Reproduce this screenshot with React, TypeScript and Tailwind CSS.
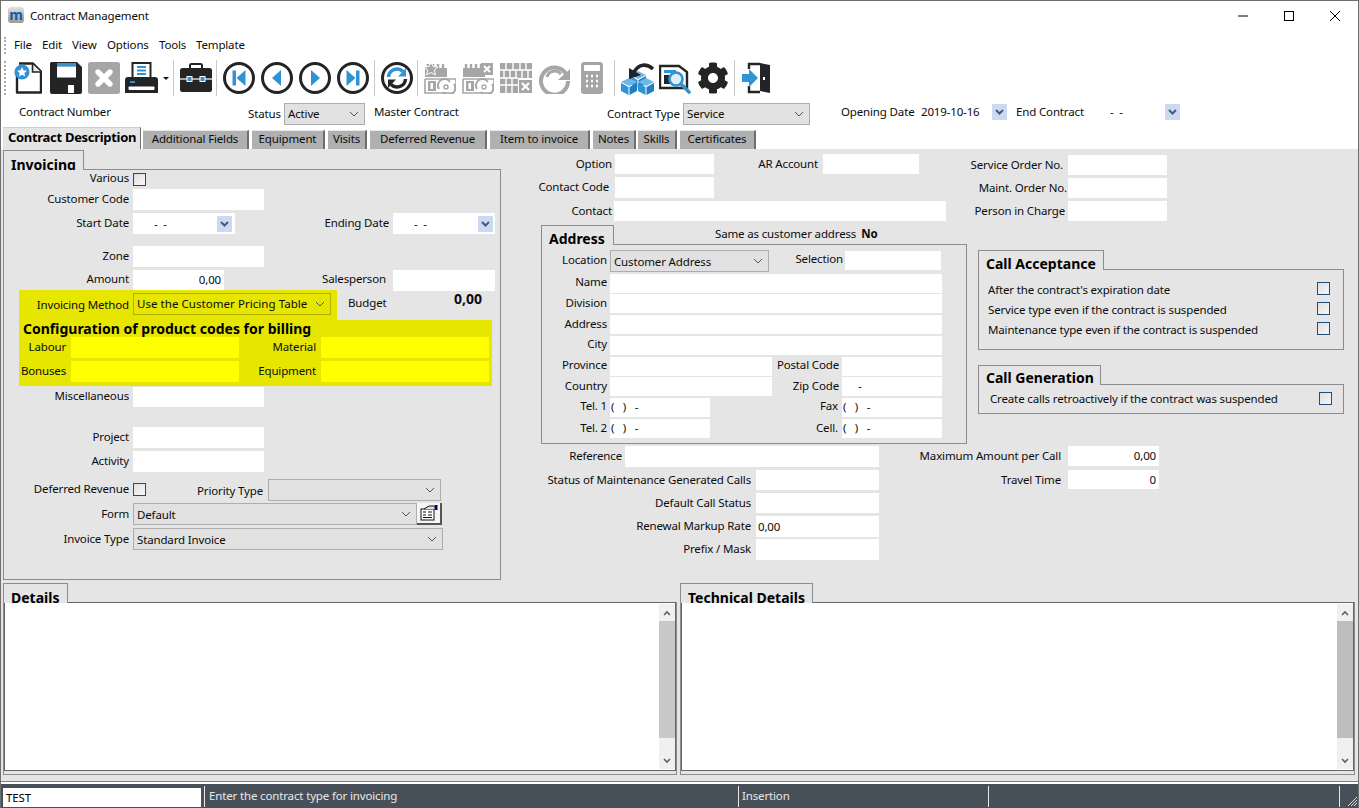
import React from "react";
import { FaCog } from "react-icons/fa";

type P = { c?: string; children?: React.ReactNode };

const L = ({ c = "", children }: P) => (
  <span className={`shrink-0 text-right whitespace-nowrap mt-[-2px] ${c}`}>{children}</span>
);
const I = ({ c = "", children }: P) => (
  <div className={`shrink-0 bg-white flex items-center whitespace-pre ${c}`}>{children}</div>
);
const Chevron = ({ c = "" }: P) => (
  <svg width="10" height="6" viewBox="0 0 10 6" className={`shrink-0 ${c}`}>
    <path d="M1 1 L5 5 L9 1" fill="none" stroke="#555" strokeWidth="1" />
  </svg>
);
const Sel = ({ c = "", t = "", children }: P & { t?: string }) => (
  <div className={`shrink-0 flex items-center justify-between border border-[#adadad] bg-[#e1e1e1] pl-[3px] pr-[5px] whitespace-pre ${c}`}>
    <span className={t}>{children}</span>
    <Chevron />
  </div>
);
const DropBtn = ({ c = "" }: P) => (
  <div className={`shrink-0 w-[15px] h-[16px] bg-[#cbdaf3] flex items-center justify-center ${c}`}>
    <svg width="9" height="6" viewBox="0 0 9 6">
      <path d="M1 1 L4.5 4.5 L8 1" fill="none" stroke="#47597a" strokeWidth="2" />
    </svg>
  </div>
);
const Check = ({ c = "" }: P) => (
  <div className={`shrink-0 w-[13px] h-[13px] border border-[#1f4e79] bg-gradient-to-br from-[#dedede] to-[#f8f8f8] ${c}`} />
);
const Legend = ({ c = "", children }: P) => (
  <div className={`relative z-10 shrink-0 -mb-px h-[20px] border border-b-0 border-[#8c8c8c] bg-[#e5e5e5] overflow-hidden pl-[7px] font-bold text-[14px] leading-[25px] text-black tracking-normal whitespace-nowrap ${c}`}>
    {children}
  </div>
);
const Scrollbar = ({ thumb }: { thumb: string }) => (
  <div className="shrink-0 w-[16px] mt-px mb-px bg-[#f0f0f0] flex flex-col items-center">
    <div className="h-[17px] flex items-center justify-center">
      <svg width="8" height="6" viewBox="0 0 8 6"><path d="M1 5 L4 2 L7 5" fill="none" stroke="#606060" strokeWidth="1.6" /></svg>
    </div>
    <div className={`w-full h-[117px] ${thumb}`} />
    <div className="flex-1 w-full flex items-end justify-center pb-[5px]">
      <svg width="8" height="6" viewBox="0 0 8 6"><path d="M1 1 L4 4 L7 1" fill="none" stroke="#606060" strokeWidth="1.6" /></svg>
    </div>
  </div>
);
const Sep = ({ c = "" }: P) => <div className={`shrink-0 w-px h-[36px] bg-[#c9c9c9] ${c}`} />;

const DK = "#222426";
const BL = "#2f93d6";
const GR = "#a6a6a6";

const NewIcon = () => (
  <svg width="28" height="32" viewBox="0 0 28 32" className="shrink-0">
    <path d="M5 1.5 H19 L27 9.5 V30.5 H3 V10" fill="#fff" stroke={DK} strokeWidth="2.4" strokeLinejoin="round" />
    <path d="M18.5 2 V10 H27" fill="#e9e9e9" stroke={DK} strokeWidth="1.6" />
    <circle cx="8" cy="10" r="7.6" fill={BL} />
    <path d="M8 5 L9.5 8.3 L13 8.7 L10.4 11 L11.1 14.5 L8 12.7 L4.9 14.5 L5.6 11 L3 8.7 L6.5 8.3 Z" fill="#fff" />
  </svg>
);
const SaveIcon = () => (
  <svg width="32" height="32" viewBox="0 0 32 32" className="shrink-0">
    <path d="M1.5 0 H27 L32 5 V30 A2 2 0 0 1 30 32 H2 A2 2 0 0 1 0 30 V1.5 A1.5 1.5 0 0 1 1.5 0 Z" fill={DK} />
    <rect x="7" y="1" width="19" height="3.5" fill={BL} />
    <rect x="7" y="4.5" width="19" height="11" fill="#fff" />
    <rect x="18" y="23" width="6" height="8" fill="#fff" />
  </svg>
);
const CancelIcon = () => (
  <svg width="32" height="32" viewBox="0 0 32 32" className="shrink-0">
    <rect width="32" height="32" rx="2.5" fill={GR} />
    <path d="M10 10 L22 22 M22 10 L10 22" stroke="#fff" strokeWidth="5.4" strokeLinecap="round" />
  </svg>
);
const PrintIcon = () => (
  <svg width="33" height="32" viewBox="0 0 33 32" className="shrink-0">
    <rect x="7.5" y="1" width="18" height="15" fill="#fff" stroke={DK} strokeWidth="2" />
    <path d="M12 5 H21 M12 8.5 H21 M12 12 H21" stroke={BL} strokeWidth="2" />
    <path d="M3 15 H30 A3 3 0 0 1 33 18 V31 H0 V18 A3 3 0 0 1 3 15 Z" fill={DK} />
    <rect x="5" y="19" width="5" height="2" fill={BL} />
    <rect x="3.5" y="24.5" width="26" height="3.5" rx="1" fill="#fff" />
  </svg>
);
const CaseIcon = () => (
  <svg width="32" height="32" viewBox="0 0 32 32" className="shrink-0">
    <path d="M10 7 V3.5 A1.5 1.5 0 0 1 11.5 2 H20.5 A1.5 1.5 0 0 1 22 3.5 V7" fill="none" stroke={DK} strokeWidth="2" />
    <rect x="0" y="6" width="32" height="24" rx="2.5" fill={DK} />
    <path d="M0 17 H32" stroke="#fff" strokeWidth="1.2" />
    <rect x="7" y="14.5" width="5" height="5" fill={BL} stroke="#fff" strokeWidth="1" />
    <rect x="20" y="14.5" width="5" height="5" fill={BL} stroke="#fff" strokeWidth="1" />
  </svg>
);
const Nav = ({ kind }: { kind: "first" | "prev" | "next" | "last" }) => (
  <svg width="32" height="32" viewBox="0 0 32 32" className="shrink-0">
    <circle cx="16" cy="16" r="14.5" fill="#fff" stroke={DK} strokeWidth="3" />
    {kind === "first" && <path d="M9.5 8.5 H13 V23.5 H9.5 Z M22.5 8 V24 L13.5 16 Z" fill={BL} />}
    {kind === "prev" && <path d="M20 8 V24 L11 16 Z" fill={BL} />}
    {kind === "next" && <path d="M12 8 V24 L21 16 Z" fill={BL} />}
    {kind === "last" && <path d="M22.5 8.5 H19 V23.5 H22.5 Z M9.5 8 V24 L18.5 16 Z" fill={BL} />}
  </svg>
);
const RefreshIcon = () => (
  <svg width="32" height="32" viewBox="0 0 32 32" className="shrink-0">
    <circle cx="16" cy="16" r="14.5" fill="#fff" stroke={DK} strokeWidth="3" />
    <path d="M7.5 15 A8.5 8.5 0 0 1 22 9.5" fill="none" stroke={BL} strokeWidth="3.4" />
    <path d="M25 6 V14.5 H17 Z" fill={BL} />
    <path d="M24.5 17 A8.5 8.5 0 0 1 10 22.5" fill="none" stroke={DK} strokeWidth="3.4" />
    <path d="M7 26 V17.5 H15 Z" fill={DK} />
  </svg>
);
const CalIcon = ({ top }: { top: "star" | "x" }) => (
  <svg width="33" height="32" viewBox="0 0 33 32" className="shrink-0">
    <path d="M2 6 H24 V15 H2 Z" fill={GR} />
    <path d="M5 2 V6 M10 2 V6 M15 2 V6 M20 2 V6" stroke={GR} strokeWidth="2.4" />
    {top === "star" ? (
      <path d="M8 0 L10 4.5 L15 5 L11.3 8 L12.4 13 L8 10.5 L3.6 13 L4.7 8 L1 5 L6 4.5 Z" fill={GR} stroke="#fff" strokeWidth="1" />
    ) : (
      <g>
        <rect x="20" y="1" width="12" height="12" fill={GR} />
        <path d="M23 4 L29 10 M29 4 L23 10" stroke="#fff" strokeWidth="2" />
      </g>
    )}
    <path d="M2 17 H33 M2 17 V31 H31 M33 17 V25" fill="none" stroke={GR} strokeWidth="1.6" />
    <rect x="5" y="19" width="8" height="10" fill={GR} />
    <rect x="7.5" y="21" width="2.5" height="6" fill="#fff" />
    <path d="M16 27 A6 6 0 0 1 27 20 M20 30 A6 6 0 0 0 31 22" fill="none" stroke={GR} strokeWidth="2" />
    <circle cx="23" cy="25" r="2" fill="none" stroke={GR} strokeWidth="1.4" />
  </svg>
);
const GridIcon = () => (
  <svg width="32" height="32" viewBox="0 0 32 32" className="shrink-0">
    <path d="M0 1 H32 V16 H18 V31 H0 Z" fill={GR} />
    <path d="M0 8 H32 M0 16 H18 M0 23 H18 M6 1 V8 M13 1 V8 M20 1 V8 M26 1 V8 M4 8 V16 M10 8 V16 M16 8 V16 M22 8 V16 M28 8 V16 M6 16 V31 M12 16 V31" stroke="#fff" strokeWidth="1.4" />
    <rect x="19" y="18" width="13" height="13" fill={GR} />
    <path d="M22 21 L29 28 M29 21 L22 28" stroke="#fff" strokeWidth="2.2" />
  </svg>
);
const GrayRefresh = () => (
  <svg width="32" height="32" viewBox="0 0 32 32" className="shrink-0">
    <path d="M28 12 A13.5 13.5 0 1 0 30 19" fill="none" stroke={GR} strokeWidth="4" />
    <path d="M9 15 A8 8 0 0 1 23 12" fill="none" stroke={GR} strokeWidth="3" />
    <path d="M32 7 V18 H20 Z" fill={GR} />
  </svg>
);
const CalcIcon = () => (
  <svg width="22" height="32" viewBox="0 0 22 32" className="shrink-0">
    <rect width="22" height="32" rx="3" fill={GR} />
    <rect x="3" y="3" width="16" height="6" rx="1" fill="#fff" />
    <path d="M5 14 H7 M10 14 H12 M15 14 H17 M5 19 H7 M10 19 H12 M15 19 H17 M5 24 H7 M10 24 H12 M15 24 H17" stroke="#fff" strokeWidth="2.4" />
  </svg>
);
const Cube = ({ x, y }: { x: number; y: number }) => (
  <g transform={`translate(${x} ${y})`}>
    <path d="M0 4 L8 0 L16 4 L8 8 Z" fill="#6cb8e8" />
    <path d="M0 5 L7.5 9 V17 L0 13 Z" fill={BL} />
    <path d="M16 5 L8.5 9 V17 L16 13 Z" fill="#1f7fc4" />
  </g>
);
const CubesIcon = () => (
  <svg width="34" height="33" viewBox="0 0 34 33" className="shrink-0">
    <Cube x={10} y={9} />
    <Cube x={1} y={16} />
    <Cube x={18} y={16} />
    <path d="M33 7 C26 1 19 2 14 10" fill="none" stroke={DK} strokeWidth="3.6" />
    <path d="M9 17 L9 6 L21 13 Z" fill={DK} />
  </svg>
);
const ReportIcon = () => (
  <svg width="32" height="32" viewBox="0 0 32 32" className="shrink-0">
    <path d="M1 4 H20 L28 10 V26 H1 Z" fill="#fff" stroke={DK} strokeWidth="2.4" />
    <rect x="5" y="8" width="12" height="3" fill={BL} />
    <rect x="5" y="13" width="6" height="9" fill={DK} />
    <circle cx="17" cy="17" r="6.5" fill="#dbeffb" stroke={BL} strokeWidth="2.6" />
    <path d="M22 22 L30 30" stroke={BL} strokeWidth="3.6" strokeLinecap="round" />
  </svg>
);
const ExitIcon = () => (
  <svg width="28" height="32" viewBox="0 0 28 32" className="shrink-0">
    <path d="M7 7 V2 H18 M7 24 V30 H18" fill="none" stroke={DK} strokeWidth="2.4" />
    <path d="M18 1 L28 3 V31 L18 29 Z" fill={DK} />
    <rect x="21" y="15" width="2" height="3" fill="#fff" />
    <path d="M0 12 H7 V7 L16 16 L7 25 V20 H0 Z" fill={BL} />
  </svg>
);

const Tab = ({ c = "", children }: P) => (
  <div className={`shrink-0 h-[19px] mt-[3px] bg-[#b0b0b0] border-t border-t-[#e8e8e8] border-r-2 border-r-[#6e6e6e] text-center leading-[16px] whitespace-nowrap ${c}`}>
    {children}
  </div>
);

const Row = ({ c = "", children }: P) => <div className={`flex items-center ${c}`}>{children}</div>;

const InvoicingPanel = () => (
  <div className="shrink-0 w-[498px] ml-[2px] mt-px flex flex-col h-[430px]">
    <Legend c="w-[81px] !leading-[27px]">Invoicing</Legend>
    <div className="flex-1 border border-[#8c8c8c] flex flex-col pt-[2px]">
      <Row c="h-[14px]">
        <L c="w-[125px]">Various</L>
        <Check c="ml-[4px]" />
      </Row>
      <Row c="h-[21px] mt-[3px]">
        <L c="w-[125px]">Customer Code</L>
        <I c="ml-[4px] w-[131px] h-full" />
      </Row>
      <Row c="h-[21px] mt-[3px]">
        <L c="w-[125px]">Start Date</L>
        <I c="ml-[4px] w-[102px] h-full justify-between pl-[21px] pr-[3px]">
          <span>-  -</span>
          <DropBtn />
        </I>
        <L c="w-[154px]">Ending Date</L>
        <I c="ml-[4px] w-[102px] h-full justify-between pl-[21px] pr-[2px]">
          <span>-  -</span>
          <DropBtn />
        </I>
      </Row>
      <Row c="h-[21px] mt-[12px]">
        <L c="w-[125px]">Zone</L>
        <I c="ml-[4px] w-[131px] h-full" />
      </Row>
      <Row c="h-[20px] mt-[3px]">
        <L c="w-[125px]">Amount</L>
        <I c="ml-[4px] w-[91px] h-full justify-end pr-[3px]">0,00</I>
        <L c="w-[162px]">Salesperson</L>
        <I c="ml-[7px] w-[102px] h-[21px] self-start" />
      </Row>
      <div className="flex h-[30px]">
        <Row c="ml-[15px] w-[318px] bg-[#e6e600]">
          <L c="w-[110px] !mt-0">Invoicing Method</L>
          <Sel c="ml-[4px] w-[198px] h-[22px] !bg-[#e6e600] !border-[#b0b000] mt-[-2px]" t="tracking-[0.05px]">
            Use the Customer Pricing Table
          </Sel>
        </Row>
        <L c="ml-[11px] w-[40px] !text-left !mt-[5px]">Budget</L>
        <L c="ml-[52px] w-[42px] font-bold text-[14px] tracking-normal !mt-[1px]">0,00</L>
      </div>
      <div className="ml-[15px] w-[473px] h-[66px] bg-[#e6e600] flex flex-col">
        <div className="h-[17px] pl-[4px] font-bold text-[14px] leading-[18px] whitespace-nowrap tracking-normal text-black">
          Configuration of product codes for billing
        </div>
        <Row c="h-[21px]">
          <L c="w-[47px]">Labour</L>
          <I c="ml-[5px] w-[168px] h-full !bg-[#ffff00]" />
          <L c="w-[77px]">Material</L>
          <I c="ml-[5px] w-[168px] h-full !bg-[#ffff00]" />
        </Row>
        <Row c="h-[21px] mt-[3px]">
          <L c="w-[47px]">Bonuses</L>
          <I c="ml-[5px] w-[168px] h-full !bg-[#ffff00]" />
          <L c="w-[77px]">Equipment</L>
          <I c="ml-[5px] w-[168px] h-full !bg-[#ffff00]" />
        </Row>
      </div>
      <Row c="h-[20px] mt-px">
        <L c="w-[125px]">Miscellaneous</L>
        <I c="ml-[4px] w-[131px] h-full" />
      </Row>
      <Row c="h-[21px] mt-[20px]">
        <L c="w-[125px]">Project</L>
        <I c="ml-[4px] w-[131px] h-full" />
      </Row>
      <Row c="h-[21px] mt-[3px]">
        <L c="w-[125px]">Activity</L>
        <I c="ml-[4px] w-[131px] h-full" />
      </Row>
      <Row c="h-[22px] mt-[7px]">
        <L c="w-[125px] !mt-[-3px]">Deferred Revenue</L>
        <Check c="ml-[4px] mt-[-1px]" />
        <L c="w-[117px] !mt-[2px]">Priority Type</L>
        <Sel c="ml-[5px] w-[173px] h-full" />
      </Row>
      <Row c="h-[22px] mt-[2px]">
        <L c="w-[125px] !mt-0">Form</L>
        <Sel c="ml-[4px] w-[284px] h-full" t="pt-px">Default</Sel>
        <div className="shrink-0 w-[25px] h-[22px] bg-[#f5f5f5] border-r-2 border-b-2 border-[#555] flex items-center justify-center">
          <svg width="18" height="16" viewBox="0 0 18 16">
            <rect x="1" y="4" width="13" height="11" fill="#fff" stroke="#111" />
            <path d="M3 7 H6 M8 7 H12 M3 10 H6 M8 10 H12 M3 12.5 H12" stroke="#111" />
            <path d="M4 4 L9 1 H15 V4" fill="#ddd" stroke="#111" />
            <rect x="15" y="0" width="2.5" height="5" fill="#000080" />
          </svg>
        </div>
      </Row>
      <Row c="h-[22px] mt-[3px]">
        <L c="w-[125px] !mt-0">Invoice Type</L>
        <Sel c="ml-[4px] w-[310px] h-full" t="pt-px">Standard Invoice</Sel>
      </Row>
    </div>
  </div>
);

const Tel = "(   )   -";

const AddressBox = () => (
  <div className="flex flex-col ml-[6px] w-[426px]">
    <div className="flex h-[20px] items-start">
      <Legend c="w-[73px] !overflow-visible">Address</Legend>
      <span className="ml-[101px] mt-px whitespace-nowrap">Same as customer address</span>
      <span className="ml-[5px] mt-px font-bold">No</span>
    </div>
    <div className="h-[200px] border border-[#8c8c8c] -mt-px pt-[5px] flex flex-col">
      <div className="flex items-start h-[22px]">
        <L c="w-[65px] !mt-[2px]">Location</L>
        <Sel c="ml-[3px] w-[159px] h-[22px]" t="pt-px">Customer Address</Sel>
        <L c="ml-[26px] w-[48px] !mt-[1px]">Selection</L>
        <I c="ml-[2px] w-[96px] h-[19px] mt-px" />
      </div>
      <Row c="h-[19px] mt-[2px]"><L c="w-[65px] !mt-[-4px]">Name</L><I c="ml-[3px] w-[332px] h-full" /></Row>
      <Row c="h-[19px] mt-[1px]"><L c="w-[65px] !mt-[-2px]">Division</L><I c="ml-[3px] w-[332px] h-full" /></Row>
      <Row c="h-[19px] mt-[2px]"><L c="w-[65px] !mt-[-2px]">Address</L><I c="ml-[3px] w-[332px] h-full" /></Row>
      <Row c="h-[19px] mt-[2px]"><L c="w-[65px] !mt-[-4px]">City</L><I c="ml-[3px] w-[332px] h-full" /></Row>
      <Row c="h-[19px] mt-[2px]">
        <L c="w-[65px] !mt-[-4px]">Province</L><I c="ml-[3px] w-[162px] h-full" />
        <L c="w-[67px] !mt-[-4px]">Postal Code</L><I c="ml-[3px] w-[100px] h-full" />
      </Row>
      <Row c="h-[19px] mt-[1px]">
        <L c="w-[65px] !mt-[-2px]">Country</L><I c="ml-[3px] w-[162px] h-full" />
        <L c="w-[67px] !mt-[-2px]">Zip Code</L><I c="ml-[3px] w-[100px] h-full pl-[16px] pb-[2px]">-</I>
      </Row>
      <Row c="h-[19px] mt-[2px]">
        <L c="w-[65px] !mt-[-4px]">Tel. 1</L><I c="ml-[3px] w-[100px] h-full pl-[1px] pb-[2px]">{Tel}</I>
        <L c="w-[128px] !mt-[-4px]">Fax</L><I c="ml-[4px] w-[100px] h-full pl-[1px] pb-[2px]">{Tel}</I>
      </Row>
      <Row c="h-[19px] mt-[2px]">
        <L c="w-[65px] !mt-[-2px]">Tel. 2</L><I c="ml-[3px] w-[100px] h-full pl-[1px] pb-[2px]">{Tel}</I>
        <L c="w-[128px] !mt-[-2px]">Cell.</L><I c="ml-[4px] w-[100px] h-full pl-[1px] pb-[2px]">{Tel}</I>
      </Row>
    </div>
  </div>
);

const MiddleCol = () => (
  <div className="shrink-0 w-[432px] flex flex-col">
    <Row c="h-[20px] mt-[5px]">
      <L c="w-[77px] !mt-0">Option</L>
      <I c="ml-[3px] w-[99px] h-full" />
      <L c="w-[104px] !mt-0">AR Account</L>
      <I c="ml-[5px] w-[96px] h-full" />
    </Row>
    <Row c="h-[21px] mt-[3px]">
      <L c="w-[74px]">Contact Code</L>
      <I c="ml-[6px] w-[99px] h-full" />
    </Row>
    <Row c="h-[20px] mt-[3px]">
      <L c="w-[77px] !mt-0">Contact</L>
      <I c="ml-[2px] w-[332px] h-full" />
    </Row>
    <div className="mt-[4px]"><AddressBox /></div>
  </div>
);

const RightCol = () => (
  <div className="flex-1 flex flex-col">
    <Row c="h-[20px] mt-[6px]"><L c="w-[96px] !mt-0">Service Order No.</L><I c="ml-[5px] w-[99px] h-full" /></Row>
    <Row c="h-[20px] mt-[3px]"><L c="w-[100px] !mt-0">Maint. Order No.</L><I c="ml-[1px] w-[99px] h-full" /></Row>
    <Row c="h-[20px] mt-[3px]"><L c="w-[98px] !mt-0">Person in Charge</L><I c="ml-[3px] w-[99px] h-full" /></Row>
    <div className="ml-[11px] mt-[29px] w-[366px] flex flex-col">
      <Legend c="w-[126px] !overflow-visible">Call Acceptance</Legend>
      <div className="h-[81px] border border-[#8c8c8c] pt-[10px] pl-[9px] pr-[13px]">
        <Row c="h-[20px] justify-between"><span>After the contract's expiration date</span><Check c="mb-[3px]" /></Row>
        <Row c="h-[20px] justify-between"><span>Service type even if the contract is suspended</span><Check c="mb-[3px]" /></Row>
        <Row c="h-[20px] justify-between"><span>Maintenance type even if the contract is suspended</span><Check c="mb-[3px]" /></Row>
      </div>
      <Legend c="w-[123px] mt-[15px] !leading-[23px] !overflow-visible">Call Generation</Legend>
      <div className="h-[30px] border border-[#8c8c8c] pt-[4px] pl-[11px] pr-[11px]">
        <Row c="h-[20px] justify-between"><span>Create calls retroactively if the contract was suspended</span><Check c="mb-[2px]" /></Row>
      </div>
    </div>
  </div>
);

const LowerRows = () => (
  <div className="flex flex-col mt-[2px]">
    <Row c="h-[21px]">
      <L c="w-[87px]">Reference</L>
      <I c="ml-[3px] w-[254px] h-full" />
      <L c="w-[182px]">Maximum Amount per Call</L>
      <I c="ml-[7px] w-[91px] h-[20px] self-start justify-end pr-[3px]">0,00</I>
    </Row>
    <Row c="h-[20px] mt-[3px]">
      <L c="w-[216px] !mt-0">Status of Maintenance Generated Calls</L>
      <I c="ml-[5px] w-[123px] h-full" />
      <L c="w-[182px] !mt-0">Travel Time</L>
      <I c="ml-[7px] w-[91px] h-[19px] self-start justify-end pr-[3px]">0</I>
    </Row>
    <Row c="h-[20px] mt-[3px]">
      <L c="w-[216px] !mt-0">Default Call Status</L>
      <I c="ml-[5px] w-[123px] h-full" />
    </Row>
    <Row c="h-[21px] mt-[3px]">
      <L c="w-[216px]">Renewal Markup Rate</L>
      <I c="ml-[5px] w-[123px] h-full pl-[2px]">0,00</I>
    </Row>
    <Row c="h-[21px] mt-[2px]">
      <L c="w-[216px]">Prefix / Mask</L>
      <I c="ml-[5px] w-[123px] h-full" />
    </Row>
  </div>
);

const TextBox = ({ title, tabW, w, ml, thumb }: { title: string; tabW: string; w: string; ml: string; thumb: string }) => (
  <div className={`shrink-0 flex flex-col ${w} ${ml}`}>
    <Legend c={`${tabW} !leading-[27px]`}>{title}</Legend>
    <div className="h-[173px] border border-[#8c8c8c] border-t-0 flex flex-col">
      <div className="h-[169px] border border-[#666] bg-white flex justify-end">
        <Scrollbar thumb={thumb} />
      </div>
    </div>
  </div>
);

export default function App() {
  return (
    <div className="w-[1359px] h-[808px] overflow-hidden bg-white border-x border-t border-[#6f6f6f] flex flex-col font-['Noto_Sans','Open_Sans',sans-serif] text-[11.5px] tracking-[-0.15px] leading-[16px] text-[#0c0c0c]">
      {/* title bar */}
      <div className="shrink-0 h-[33px] flex items-center pb-[5px]">
        <div className="ml-[7px] w-[16px] h-[16px] rounded-[3px] bg-gradient-to-b from-[#e2e2e2] to-[#9a9a9a] flex items-center justify-center">
          <span className="font-bold text-[14px] leading-[16px] tracking-normal text-[#0f5fa8]">m</span>
        </div>
        <span className="ml-[6px] mt-[2px]">Contract Management</span>
        <div className="ml-auto flex items-center mt-[1px]">
          <svg width="10" height="2" viewBox="0 0 10 2" className="mr-[36px]"><path d="M0 1 H10" stroke="#000" /></svg>
          <svg width="10" height="10" viewBox="0 0 10 10" className="mr-[36px]"><rect x="0.5" y="0.5" width="9" height="9" fill="none" stroke="#000" /></svg>
          <svg width="10" height="10" viewBox="0 0 10 10" className="mr-[18px]"><path d="M0 0 L10 10 M10 0 L0 10" stroke="#000" /></svg>
        </div>
      </div>
      {/* menu */}
      <div className="shrink-0 h-[22px] flex items-center">
        <div className="ml-[3px] w-[3px] h-[17px] border-l-2 border-dotted border-[#aaa]" />
        <div className="ml-[7px] flex">
          <span className="w-[28px]">File</span>
          <span className="w-[30px]">Edit</span>
          <span className="w-[35px]">View</span>
          <span className="w-[52px]">Options</span>
          <span className="w-[37px]">Tools</span>
          <span>Template</span>
        </div>
      </div>
      {/* toolbar */}
      <div className="shrink-0 h-[44px] flex items-center">
        <div className="ml-[3px] w-[3px] h-[34px] border-l-2 border-dotted border-[#aaa]" />
        <div className="ml-[7px] flex items-center">
          <NewIcon />
          <div className="ml-[8px]"><SaveIcon /></div>
          <div className="ml-[6px]"><CancelIcon /></div>
          <div className="ml-[5px]"><PrintIcon /></div>
          <svg width="6" height="3" viewBox="0 0 6 3" className="ml-[5px] shrink-0"><path d="M0 0 H6 L3 3 Z" fill="#111" /></svg>
          <Sep c="ml-[4px]" />
          <div className="ml-[6px]"><CaseIcon /></div>
          <Sep c="ml-[4px]" />
          <div className="ml-[6px]"><Nav kind="first" /></div>
          <div className="ml-[6px]"><Nav kind="prev" /></div>
          <div className="ml-[6px]"><Nav kind="next" /></div>
          <div className="ml-[6px]"><Nav kind="last" /></div>
          <Sep c="ml-[5px]" />
          <div className="ml-[6px]"><RefreshIcon /></div>
          <Sep c="ml-[4px]" />
          <div className="ml-[5px]"><CalIcon top="star" /></div>
          <div className="ml-[5px]"><CalIcon top="x" /></div>
          <div className="ml-[6px]"><GridIcon /></div>
          <div className="ml-[6px]"><GrayRefresh /></div>
          <div className="ml-[11px]"><CalcIcon /></div>
          <Sep c="ml-[11px]" />
          <div className="ml-[5px]"><CubesIcon /></div>
          <div className="ml-[5px]"><ReportIcon /></div>
          <div className="ml-[6px]"><FaCog size={32} color={DK} /></div>
          <Sep c="ml-[5px]" />
          <div className="ml-[7px]"><ExitIcon /></div>
        </div>
      </div>
      {/* info row */}
      <div className="shrink-0 h-[27px] flex items-center whitespace-nowrap">
        <span className="ml-[18px] w-[229px] mt-[-4px]">Contract Number</span>
        <span className="w-[36px]">Status</span>
        <Sel c="w-[81px] h-[22px]">Active</Sel>
        <span className="ml-[9px] w-[233px] mt-[-4px]">Master Contract</span>
        <span className="w-[76px]">Contract Type</span>
        <Sel c="w-[127px] h-[22px]">Service</Sel>
        <span className="ml-[31px] w-[80px] mt-[-4px]">Opening Date</span>
        <span className="w-[71px] mt-[-4px]">2019-10-16</span>
        <DropBtn c="mt-[-3px]" />
        <span className="ml-[9px] w-[94px] mt-[-4px]">End Contract</span>
        <span className="w-[55px] mt-[-4px] whitespace-pre">-  -</span>
        <DropBtn c="mt-[-3px]" />
      </div>
      {/* tabs */}
      <div className="shrink-0 h-[22px] flex">
        <div className="ml-[2px] w-[138px] h-[22px] bg-[#e5e5e5] border-r border-r-[#6e6e6e] border-t border-t-[#cfcfcf] pl-[5px] font-bold text-[13px] leading-[19px] tracking-[-0.3px] text-black whitespace-nowrap">
          Contract Description
        </div>
        <Tab c="ml-[2px] w-[106px]">Additional Fields</Tab>
        <Tab c="ml-[3px] w-[73px]">Equipment</Tab>
        <Tab c="ml-[3px] w-[39px]">Visits</Tab>
        <Tab c="ml-[3px] w-[117px]">Deferred Revenue</Tab>
        <Tab c="ml-[3px] w-[100px]">Item to invoice</Tab>
        <Tab c="ml-[3px] w-[43px]">Notes</Tab>
        <Tab c="ml-[2px] w-[39px]">Skills</Tab>
        <Tab c="ml-[3px] w-[76px]">Certificates</Tab>
      </div>
      {/* content */}
      <div className="shrink-0 h-[632px] bg-[#e5e5e5] flex flex-col">
        <div className="shrink-0 h-[433px] flex">
          <InvoicingPanel />
          <div className="ml-[34px] flex-1 flex flex-col">
            <div className="flex h-[295px]">
              <MiddleCol />
              <RightCol />
            </div>
            <LowerRows />
          </div>
        </div>
        <div className="flex mt-px">
          <TextBox title="Details" tabW="w-[65px]" w="w-[674px]" ml="ml-[2px]" thumb="bg-[#c8c8c8]" />
          <TextBox title="Technical Details" tabW="w-[133px]" w="w-[675px]" ml="ml-[3px]" thumb="bg-[#bdbdbd]" />
        </div>
      </div>
      <div className="shrink-0 h-px bg-[#808080]" />
      <div className="shrink-0 h-[2px] bg-white" />
      {/* status bar */}
      <div className="shrink-0 h-[24px] bg-[#475059] flex items-center text-[#e8e8e8]">
        <div className="ml-[2px] mt-[2px] w-[198px] h-[19px] bg-white text-black pl-[3px] leading-[20px]">TEST</div>
        <div className="ml-[3px] w-px h-[21px] bg-[#e8e8e8]" />
        <span className="ml-[4px] w-[529px]">Enter the contract type for invoicing</span>
        <div className="w-px h-[21px] bg-[#e8e8e8]" />
        <span className="ml-[3px] w-[246px]">Insertion</span>
        <div className="w-px h-[21px] bg-[#e8e8e8]" />
        <div className="ml-[350px] w-px h-[21px] bg-[#e8e8e8]" />
        <svg width="16" height="16" viewBox="0 0 16 16" className="ml-[2px] mt-[6px]">
          <path d="M15 6 L6 15 M15 9 L9 15 M15 12 L12 15" stroke="#ddd" />
        </svg>
      </div>
    </div>
  );
}
